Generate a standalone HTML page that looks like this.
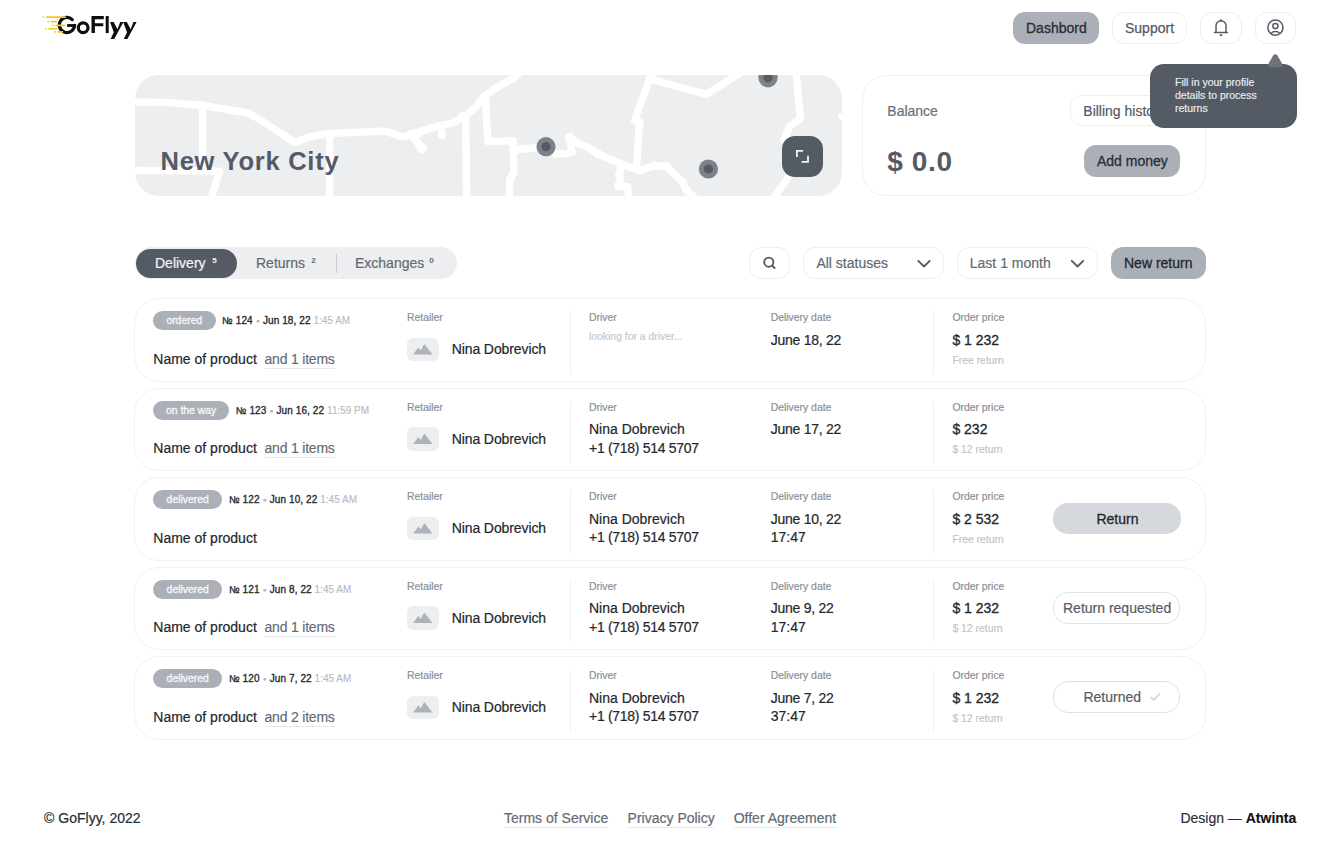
<!DOCTYPE html>
<html><head><meta charset="utf-8"><title>GoFlyy</title>
<style>
*{margin:0;padding:0;box-sizing:border-box}
html,body{width:1340px;height:846px;overflow:hidden;background:#fff}
body{position:relative;font-family:"Liberation Sans",sans-serif;color:#24272c}
.a{position:absolute}
.t{position:absolute;white-space:nowrap;line-height:1}
.box{position:absolute;border-radius:12px}
.ol{border:1.5px solid #eceef0;background:#fff}
.gr{background:#abb0b8}
.md{-webkit-text-stroke:0.25px currentColor}
.sb{-webkit-text-stroke:0.3px currentColor}
svg{position:absolute;overflow:visible}
</style></head><body>
<svg style="left:0;top:0" width="150" height="50" viewBox="0 0 150 50">
<g fill="#0d0d0d">
<path d="M72.3 19.6A7.6 7.6 0 1 0 74.5 25.4" fill="none" stroke="#0d0d0d" stroke-width="3.2" stroke-linecap="round"/>
<path d="M76.1 24.1H67.1V26.9H76.1Z"/>
<circle cx="83.15" cy="27.75" r="4.85" fill="none" stroke="#0d0d0d" stroke-width="3.2"/>
<path d="M91.5 16.05H103.8V19.3H94.9V23.2H103.3V26.3H94.9V33.1H91.5Z"/>
<path d="M105.7 16.05H108.7V33.1H105.7Z"/>
<path d="M110 22.1H113.6L117.5 29.2L120.2 22.1H123.4L114.2 38.9H110.6L113.8 32.2Z"/>
<path d="M123.2 22.1H126.8L130.7 29.2L133.4 22.1H136.6L127.4 38.9H123.8L127 32.2Z"/>
</g></svg>
<svg style="left:0;top:0" width="150" height="50" viewBox="0 0 150 50">
<g stroke="#f6c928" stroke-width="1.6" stroke-linecap="round" fill="none">
<path d="M43.3 17.1h0.3M46.3 17.1h19"/>
<path d="M48 21.6h0.3M51.2 21.6h5.6"/>
<path d="M52.8 25.4h0.3M56 25.4h8.8"/>
<path d="M45.7 28.7h0.3M48.6 28.7h8.2"/>
<path d="M55 31.9h0.3M58 31.9h4.5"/>
</g></svg>
<div class="box gr" style="left:1013px;top:12px;width:86px;height:32px"></div>
<div class="t" style="left:1026px;top:21.15px;font-size:14px;color:#2a2d33;font-weight:normal;-webkit-text-stroke:0.3px #2a2d33;">Dashbord</div>
<div class="box ol" style="left:1112px;top:12px;width:75px;height:32px"></div>
<div class="t" style="left:1125px;top:21.15px;font-size:14px;color:#555b64;font-weight:normal;-webkit-text-stroke:0.25px #555b64;">Support</div>
<div class="box ol" style="left:1200px;top:12px;width:42px;height:32px"></div>
<div class="box ol" style="left:1255px;top:12px;width:41px;height:32px"></div>
<svg style="left:0;top:0" width="1340" height="60" viewBox="0 0 1340 60">
<g stroke="#555b64" stroke-width="1.5" fill="none" stroke-linecap="round" stroke-linejoin="round">
<path d="M1216 32.3V25.8a5 5 0 0 1 10 0V32.3"/>
<path d="M1214.5 32.5H1227.5"/>
<path d="M1221 20.3v0.5" stroke-width="2"/>
<path d="M1220.5 35.2h1" stroke-width="1.7"/>
<circle cx="1275.4" cy="27.6" r="7.6"/>
<circle cx="1275.4" cy="26" r="2.6"/>
<path d="M1271.4 33.2c0.8-1.3 2.3-1.8 4-1.8s3.2 0.5 4 1.8"/>
</g></svg>
<div class="a" style="left:134.5px;top:75px;width:707.8px;height:121px;border-radius:24px;background:#edeef0;overflow:hidden">
<svg style="left:-0.5px;top:0" width="708" height="121" viewBox="134 75 708 121">
<g stroke="#fff" stroke-width="7.4" fill="none" stroke-linecap="round" stroke-linejoin="round">
<path d="M130 101.8 L171 102.6 L205 105.8 L248 113 L259 119 L294.8 142.5 L309 137 L327 133.6 L370 131.8 L385 131 L403 137 L413.7 133.6 L428 129 L440.6 125.5 L453 122.8 L465.7 115.7 L474.6 108.5 L483.6 96.9 L496 88 L514 78 L522 70"/>
<path d="M410 134 L418 143 L421.8 149.7"/>
<path d="M419 145 L421 149"/>
<path d="M441 126 L442 135"/>
<path d="M202.5 105 L202.5 170"/>
<path d="M130 170.3 L219.6 171.2 L210.6 200"/>
<path d="M329.7 133 L329.7 200"/>
<path d="M465.7 116 L466.6 200"/>
<path d="M485.4 98.7 L488 141.6 L513 140.7 L514 172 L509.6 180 L509.6 200"/>
<path d="M514 149.7 L546 147"/>
<path d="M546 146.7 L556.1 153.6 L566.9 153.6 L571.6 151.6 L569.6 137.5 L577.6 142.8 L587 146.9 L597.8 153.6 L612.5 160.3 L626 165.7 L639.4 170.4 L654.2 165.7 L666.3 166.3 L674.3 173.7 L682.4 181.8 L686.4 189.9 L697 200"/>
<path d="M620.6 166 L619.3 175.1 L620.6 179.1 L617.9 185.8 L627.3 187.2 L629.3 200"/>
<path d="M636.6 167 L639.4 122.7 L634.6 120.4 L650 77.8 L654 70"/>
<path d="M652 79.7 L706.4 94.3 L745 70"/>
<path d="M795.7 70 L800.5 118.5 L789.8 126.3 L784 140"/>
<path d="M789.8 174.8 L772.4 200"/>
<path d="M842 116.6 L846 116.6"/>
</g>
<g>
<circle cx="422" cy="148" r="4.8" fill="#fff"/><circle cx="442" cy="134.5" r="4.3" fill="#fff"/><circle cx="463.5" cy="116.5" r="5" fill="#fff"/><circle cx="417.6" cy="133.7" r="4.2" fill="#fff"/><circle cx="569.6" cy="137.5" r="4.5" fill="#fff"/><circle cx="571.6" cy="151.6" r="4.3" fill="#fff"/><circle cx="556" cy="154" r="4" fill="#fff"/><circle cx="597.8" cy="153.6" r="4.3" fill="#fff"/><circle cx="612.5" cy="160.3" r="4.2" fill="#fff"/><circle cx="654.2" cy="165.7" r="4.5" fill="#fff"/><circle cx="666.3" cy="166.3" r="4.3" fill="#fff"/><circle cx="682.4" cy="181.8" r="4.3" fill="#fff"/><circle cx="686.4" cy="189.9" r="4.2" fill="#fff"/><circle cx="639.4" cy="170.4" r="4.5" fill="#fff"/><circle cx="619.3" cy="175.1" r="4.3" fill="#fff"/><circle cx="617.9" cy="185.8" r="4.2" fill="#fff"/><circle cx="627.3" cy="187.2" r="4.2" fill="#fff"/><circle cx="639.4" cy="122.7" r="4.5" fill="#fff"/>
<circle cx="546" cy="146.7" r="9.6" fill="#7b8289"/><circle cx="546" cy="146.7" r="4.6" fill="#555b64"/>
<circle cx="708.4" cy="169" r="9.6" fill="#7b8289"/><circle cx="708.4" cy="169" r="4.6" fill="#555b64"/>
<circle cx="768" cy="77.8" r="9.6" fill="#7b8289"/><circle cx="768" cy="77.8" r="4.6" fill="#555b64"/>
</g>
</svg>
<div class="a" style="left:647.5px;top:60.5px;width:41px;height:41px;border-radius:13px;background:#555b64"></div>
</div>
<svg style="left:0;top:0" width="1340" height="200" viewBox="0 0 1340 200">
<g stroke="#f2f3f4" stroke-width="1.8" fill="none">
<path d="M796.9 157V150.8H803.1"/>
<path d="M808 155.7V161.8H801.6"/>
</g></svg>
<div class="t" style="left:160.5px;top:149.41px;font-size:25.5px;color:#545b66;font-weight:bold;letter-spacing:0.75px;">New York City</div>
<div class="a" style="left:861.8px;top:75px;width:344px;height:121px;border-radius:24px;border:1.5px solid #eff0f2"></div>
<div class="t" style="left:887.3px;top:103.85px;font-size:14px;color:#6b7079;font-weight:normal;-webkit-text-stroke:0.2px #6b7079;">Balance</div>
<div class="t" style="left:887.3px;top:147.60px;font-size:28px;color:#545b66;font-weight:bold;letter-spacing:0.6px;">$ 0.0</div>
<div class="box ol" style="left:1070px;top:94.5px;width:130px;height:31px"></div>
<div class="t" style="left:1083.3px;top:103.85px;font-size:14px;color:#555b64;font-weight:normal;-webkit-text-stroke:0.2px #555b64;">Billing history</div>
<div class="box gr" style="left:1084px;top:145px;width:96px;height:32px"></div>
<div class="t" style="left:1097px;top:153.65px;font-size:14px;color:#2a2d33;font-weight:normal;-webkit-text-stroke:0.3px #2a2d33;">Add money</div>
<div class="a" style="left:1150px;top:64px;width:147px;height:64px;border-radius:14px;background:#555b64"></div>
<svg style="left:0;top:0" width="1340" height="140" viewBox="0 0 1340 140">
<path d="M1275.3 54.2 Q1274 54.2 1273.2 55.4 L1268.6 63.6 Q1267.6 67.2 1270.2 67.2 L1280.4 67.2 Q1283 67.2 1282 63.6 L1277.4 55.4 Q1276.6 54.2 1275.3 54.2Z" fill="#6c737a"/>
</svg>
<div class="t" style="left:1175px;top:77.41px;font-size:10.5px;color:#eceef0;font-weight:normal;-webkit-text-stroke:0.15px #eceef0;">Fill in your profile</div>
<div class="t" style="left:1175px;top:90.11px;font-size:10.5px;color:#eceef0;font-weight:normal;-webkit-text-stroke:0.15px #eceef0;">details to process</div>
<div class="t" style="left:1175px;top:102.81px;font-size:10.5px;color:#eceef0;font-weight:normal;-webkit-text-stroke:0.15px #eceef0;">returns</div>
<div class="a" style="left:134.5px;top:247px;width:322px;height:32px;border-radius:16px;background:#edeef0"></div>
<div class="a" style="left:135.5px;top:248.5px;width:101.5px;height:29px;border-radius:14.5px;background:#555b64"></div>
<div class="t" style="left:155px;top:256.15px;font-size:14px;color:#f3f4f5;font-weight:normal;-webkit-text-stroke:0.2px #f3f4f5;">Delivery</div>
<div class="t" style="left:212.3px;top:256.53px;font-size:8px;color:#f3f4f5;font-weight:bold;">5</div>
<div class="t" style="left:256px;top:256.15px;font-size:14px;color:#636a74;font-weight:normal;-webkit-text-stroke:0.2px #636a74;">Returns</div>
<div class="t" style="left:311.3px;top:256.53px;font-size:8px;color:#636a74;font-weight:bold;">2</div>
<div class="a" style="left:335.5px;top:254px;width:1.2px;height:19px;background:#c9cdd2"></div>
<div class="t" style="left:355px;top:256.15px;font-size:14px;color:#636a74;font-weight:normal;-webkit-text-stroke:0.2px #636a74;">Exchanges</div>
<div class="t" style="left:429.3px;top:256.53px;font-size:8px;color:#636a74;font-weight:bold;">0</div>
<div class="box ol" style="left:749px;top:247px;width:41px;height:32px"></div>
<div class="box ol" style="left:803px;top:247px;width:141px;height:32px"></div>
<div class="t" style="left:816.4px;top:256.15px;font-size:14px;color:#636a74;font-weight:normal;-webkit-text-stroke:0.2px #636a74;">All statuses</div>
<div class="box ol" style="left:957px;top:247px;width:141px;height:32px"></div>
<div class="t" style="left:969.8px;top:256.15px;font-size:14px;color:#636a74;font-weight:normal;-webkit-text-stroke:0.2px #636a74;">Last 1 month</div>
<div class="box gr" style="left:1111px;top:247px;width:95px;height:32px"></div>
<div class="t" style="left:1124px;top:256.15px;font-size:14px;color:#24272c;font-weight:normal;-webkit-text-stroke:0.3px #24272c;">New return</div>
<svg style="left:0;top:0" width="1340" height="300" viewBox="0 0 1340 300">
<g stroke="#555b64" stroke-width="1.9" fill="none" stroke-linecap="round" stroke-linejoin="round">
<circle cx="768.8" cy="262.2" r="4.6"/>
<path d="M772.2 265.6L774.6 268"/>
<path d="M918.3 260.8L924 266.5L929.7 260.8"/>
<path d="M1071.8 260.8L1077.5 266.5L1083.2 260.8"/>
</g></svg>
<div class="a" style="left:133.8px;top:298.4px;width:1072.2px;height:83.3px;border-radius:25px;border:1.6px solid #f0f1f3"></div>
<div class="a" style="left:153px;top:311px;width:62.6px;height:19px;border-radius:9.5px;background:#abb0b8;color:#f7f8f9;font-size:10.4px;line-height:19.6px;text-align:center;white-space:nowrap;-webkit-text-stroke:0.3px #f7f8f9">ordered</div>
<div class="t" style="left:222.1px;top:316.14px;font-size:10px;color:#24272c;font-weight:normal;letter-spacing:0.1px;-webkit-text-stroke:0.32px #24272c;">№ 124 <span style="color:#b5b9bf;font-size:7px;vertical-align:1px;-webkit-text-stroke:0">●</span> Jun 18, 22 <span style="color:#b5b9bf;font-weight:normal;-webkit-text-stroke:0.1px #b5b9bf;letter-spacing:0">1:45 AM</span></div>
<div class="t" style="left:153.3px;top:351.65px;font-size:14px;color:#24272c;font-weight:normal;-webkit-text-stroke:0.2px #24272c;">Name of product</div>
<div class="a" style="left:264.5px;top:367.5px;width:70px;height:1px;background:#e6e8eb"></div>
<div class="t" style="left:264.5px;top:351.65px;font-size:14px;color:#636a74;font-weight:normal;letter-spacing:-0.2px;-webkit-text-stroke:0.15px #636a74;">and 1 items</div>
<div class="t" style="left:407px;top:313.20px;font-size:10.4px;color:#8a9099;font-weight:normal;-webkit-text-stroke:0.2px #8a9099;">Retailer</div>
<div class="a" style="left:407px;top:337.5px;width:31.5px;height:23.5px;border-radius:6px;background:#edeef0"></div>
<svg style="left:0;top:0" width="1340" height="846" viewBox="0 0 1340 846"><path d="M413.1 354.6 L418.3 347.6 L420.6 350.2 L424.3 343.9 L432.5 354.6Z" fill="#aeb3ba"/><path d="M420.3 347.9 L421.6 349.3" stroke="#edeef0" stroke-width="0.8"/></svg>
<div class="t" style="left:451.7px;top:342.15px;font-size:14px;color:#24272c;font-weight:normal;letter-spacing:-0.1px;-webkit-text-stroke:0.2px #24272c;">Nina Dobrevich</div>
<div class="a" style="left:569.5px;top:311px;width:1px;height:63px;background:#eef0f2"></div>
<div class="t" style="left:589px;top:313.20px;font-size:10.4px;color:#8a9099;font-weight:normal;-webkit-text-stroke:0.2px #8a9099;">Driver</div>
<div class="t" style="left:589px;top:332.00px;font-size:10.4px;color:#c3c7cc;font-weight:normal;-webkit-text-stroke:0.15px #c3c7cc;">looking for a driver...</div>
<div class="t" style="left:770.7px;top:313.20px;font-size:10.4px;color:#8a9099;font-weight:normal;-webkit-text-stroke:0.2px #8a9099;">Delivery date</div>
<div class="t" style="left:770.7px;top:332.75px;font-size:14px;color:#24272c;font-weight:normal;letter-spacing:-0.25px;-webkit-text-stroke:0.2px #24272c;">June 18, 22</div>
<div class="a" style="left:933px;top:311px;width:1px;height:63px;background:#eef0f2"></div>
<div class="t" style="left:952.4px;top:313.20px;font-size:10.4px;color:#8a9099;font-weight:normal;-webkit-text-stroke:0.2px #8a9099;">Order price</div>
<div class="t" style="left:952.4px;top:332.65px;font-size:14px;color:#24272c;font-weight:normal;letter-spacing:0px;-webkit-text-stroke:0.3px #24272c;">$ 1 232</div>
<div class="t" style="left:952.4px;top:355.80px;font-size:10.4px;color:#c0c4c9;font-weight:normal;-webkit-text-stroke:0.15px #c0c4c9;">Free return</div>
<div class="a" style="left:133.8px;top:387.9px;width:1072.2px;height:83.3px;border-radius:25px;border:1.6px solid #f0f1f3"></div>
<div class="a" style="left:153px;top:400.5px;width:76.2px;height:19px;border-radius:9.5px;background:#abb0b8;color:#f7f8f9;font-size:10.4px;line-height:19.6px;text-align:center;white-space:nowrap;-webkit-text-stroke:0.3px #f7f8f9">on the way</div>
<div class="t" style="left:235.7px;top:405.64px;font-size:10px;color:#24272c;font-weight:normal;letter-spacing:0.1px;-webkit-text-stroke:0.32px #24272c;">№ 123 <span style="color:#b5b9bf;font-size:7px;vertical-align:1px;-webkit-text-stroke:0">●</span> Jun 16, 22 <span style="color:#b5b9bf;font-weight:normal;-webkit-text-stroke:0.1px #b5b9bf;letter-spacing:0">11:59 PM</span></div>
<div class="t" style="left:153.3px;top:441.15px;font-size:14px;color:#24272c;font-weight:normal;-webkit-text-stroke:0.2px #24272c;">Name of product</div>
<div class="a" style="left:264.5px;top:457.0px;width:70px;height:1px;background:#e6e8eb"></div>
<div class="t" style="left:264.5px;top:441.15px;font-size:14px;color:#636a74;font-weight:normal;letter-spacing:-0.2px;-webkit-text-stroke:0.15px #636a74;">and 1 items</div>
<div class="t" style="left:407px;top:402.70px;font-size:10.4px;color:#8a9099;font-weight:normal;-webkit-text-stroke:0.2px #8a9099;">Retailer</div>
<div class="a" style="left:407px;top:427.0px;width:31.5px;height:23.5px;border-radius:6px;background:#edeef0"></div>
<svg style="left:0;top:0" width="1340" height="846" viewBox="0 0 1340 846"><path d="M413.1 444.1 L418.3 437.1 L420.6 439.7 L424.3 433.4 L432.5 444.1Z" fill="#aeb3ba"/><path d="M420.3 437.4 L421.6 438.8" stroke="#edeef0" stroke-width="0.8"/></svg>
<div class="t" style="left:451.7px;top:431.65px;font-size:14px;color:#24272c;font-weight:normal;letter-spacing:-0.1px;-webkit-text-stroke:0.2px #24272c;">Nina Dobrevich</div>
<div class="a" style="left:569.5px;top:400.5px;width:1px;height:63px;background:#eef0f2"></div>
<div class="t" style="left:589px;top:402.70px;font-size:10.4px;color:#8a9099;font-weight:normal;-webkit-text-stroke:0.2px #8a9099;">Driver</div>
<div class="t" style="left:589px;top:422.05px;font-size:14px;color:#24272c;font-weight:normal;-webkit-text-stroke:0.2px #24272c;">Nina Dobrevich</div>
<div class="t" style="left:589px;top:440.65px;font-size:14px;color:#24272c;font-weight:normal;letter-spacing:-0.3px;-webkit-text-stroke:0.2px #24272c;">+1 (718) 514 5707</div>
<div class="t" style="left:770.7px;top:402.70px;font-size:10.4px;color:#8a9099;font-weight:normal;-webkit-text-stroke:0.2px #8a9099;">Delivery date</div>
<div class="t" style="left:770.7px;top:422.25px;font-size:14px;color:#24272c;font-weight:normal;letter-spacing:-0.25px;-webkit-text-stroke:0.2px #24272c;">June 17, 22</div>
<div class="a" style="left:933px;top:400.5px;width:1px;height:63px;background:#eef0f2"></div>
<div class="t" style="left:952.4px;top:402.70px;font-size:10.4px;color:#8a9099;font-weight:normal;-webkit-text-stroke:0.2px #8a9099;">Order price</div>
<div class="t" style="left:952.4px;top:422.15px;font-size:14px;color:#24272c;font-weight:normal;letter-spacing:0px;-webkit-text-stroke:0.3px #24272c;">$ 232</div>
<div class="t" style="left:952.4px;top:445.30px;font-size:10.4px;color:#c0c4c9;font-weight:normal;-webkit-text-stroke:0.15px #c0c4c9;">$ 12 return</div>
<div class="a" style="left:133.8px;top:477.4px;width:1072.2px;height:83.3px;border-radius:25px;border:1.6px solid #f0f1f3"></div>
<div class="a" style="left:153px;top:490px;width:69.4px;height:19px;border-radius:9.5px;background:#abb0b8;color:#f7f8f9;font-size:10.4px;line-height:19.6px;text-align:center;white-space:nowrap;-webkit-text-stroke:0.3px #f7f8f9">delivered</div>
<div class="t" style="left:228.9px;top:495.14px;font-size:10px;color:#24272c;font-weight:normal;letter-spacing:0.1px;-webkit-text-stroke:0.32px #24272c;">№ 122 <span style="color:#b5b9bf;font-size:7px;vertical-align:1px;-webkit-text-stroke:0">●</span> Jun 10, 22 <span style="color:#b5b9bf;font-weight:normal;-webkit-text-stroke:0.1px #b5b9bf;letter-spacing:0">1:45 AM</span></div>
<div class="t" style="left:153.3px;top:530.65px;font-size:14px;color:#24272c;font-weight:normal;-webkit-text-stroke:0.2px #24272c;">Name of product</div>
<div class="t" style="left:407px;top:492.20px;font-size:10.4px;color:#8a9099;font-weight:normal;-webkit-text-stroke:0.2px #8a9099;">Retailer</div>
<div class="a" style="left:407px;top:516.5px;width:31.5px;height:23.5px;border-radius:6px;background:#edeef0"></div>
<svg style="left:0;top:0" width="1340" height="846" viewBox="0 0 1340 846"><path d="M413.1 533.6 L418.3 526.6 L420.6 529.2 L424.3 522.9 L432.5 533.6Z" fill="#aeb3ba"/><path d="M420.3 526.9 L421.6 528.3" stroke="#edeef0" stroke-width="0.8"/></svg>
<div class="t" style="left:451.7px;top:521.15px;font-size:14px;color:#24272c;font-weight:normal;letter-spacing:-0.1px;-webkit-text-stroke:0.2px #24272c;">Nina Dobrevich</div>
<div class="a" style="left:569.5px;top:490px;width:1px;height:63px;background:#eef0f2"></div>
<div class="t" style="left:589px;top:492.20px;font-size:10.4px;color:#8a9099;font-weight:normal;-webkit-text-stroke:0.2px #8a9099;">Driver</div>
<div class="t" style="left:589px;top:511.55px;font-size:14px;color:#24272c;font-weight:normal;-webkit-text-stroke:0.2px #24272c;">Nina Dobrevich</div>
<div class="t" style="left:589px;top:530.15px;font-size:14px;color:#24272c;font-weight:normal;letter-spacing:-0.3px;-webkit-text-stroke:0.2px #24272c;">+1 (718) 514 5707</div>
<div class="t" style="left:770.7px;top:492.20px;font-size:10.4px;color:#8a9099;font-weight:normal;-webkit-text-stroke:0.2px #8a9099;">Delivery date</div>
<div class="t" style="left:770.7px;top:511.75px;font-size:14px;color:#24272c;font-weight:normal;letter-spacing:-0.25px;-webkit-text-stroke:0.2px #24272c;">June 10, 22</div>
<div class="t" style="left:770.7px;top:530.15px;font-size:14px;color:#24272c;font-weight:normal;-webkit-text-stroke:0.2px #24272c;">17:47</div>
<div class="a" style="left:933px;top:490px;width:1px;height:63px;background:#eef0f2"></div>
<div class="t" style="left:952.4px;top:492.20px;font-size:10.4px;color:#8a9099;font-weight:normal;-webkit-text-stroke:0.2px #8a9099;">Order price</div>
<div class="t" style="left:952.4px;top:511.65px;font-size:14px;color:#24272c;font-weight:normal;letter-spacing:0px;-webkit-text-stroke:0.3px #24272c;">$ 2 532</div>
<div class="t" style="left:952.4px;top:534.80px;font-size:10.4px;color:#c0c4c9;font-weight:normal;-webkit-text-stroke:0.15px #c0c4c9;">Free return</div>
<div class="a" style="left:1053px;top:502.7px;width:127.5px;height:31.5px;border-radius:15px;background:#d5d8dc"></div>
<div class="t" style="left:1096.4px;top:511.65px;font-size:14px;color:#24272c;font-weight:normal;-webkit-text-stroke:0.3px #24272c;">Return</div>
<div class="a" style="left:133.8px;top:566.9px;width:1072.2px;height:83.3px;border-radius:25px;border:1.6px solid #f0f1f3"></div>
<div class="a" style="left:153px;top:579.5px;width:69.4px;height:19px;border-radius:9.5px;background:#abb0b8;color:#f7f8f9;font-size:10.4px;line-height:19.6px;text-align:center;white-space:nowrap;-webkit-text-stroke:0.3px #f7f8f9">delivered</div>
<div class="t" style="left:228.9px;top:584.63px;font-size:10px;color:#24272c;font-weight:normal;letter-spacing:0.1px;-webkit-text-stroke:0.32px #24272c;">№ 121 <span style="color:#b5b9bf;font-size:7px;vertical-align:1px;-webkit-text-stroke:0">●</span> Jun 8, 22 <span style="color:#b5b9bf;font-weight:normal;-webkit-text-stroke:0.1px #b5b9bf;letter-spacing:0">1:45 AM</span></div>
<div class="t" style="left:153.3px;top:620.15px;font-size:14px;color:#24272c;font-weight:normal;-webkit-text-stroke:0.2px #24272c;">Name of product</div>
<div class="a" style="left:264.5px;top:636.0px;width:70px;height:1px;background:#e6e8eb"></div>
<div class="t" style="left:264.5px;top:620.15px;font-size:14px;color:#636a74;font-weight:normal;letter-spacing:-0.2px;-webkit-text-stroke:0.15px #636a74;">and 1 items</div>
<div class="t" style="left:407px;top:581.70px;font-size:10.4px;color:#8a9099;font-weight:normal;-webkit-text-stroke:0.2px #8a9099;">Retailer</div>
<div class="a" style="left:407px;top:606.0px;width:31.5px;height:23.5px;border-radius:6px;background:#edeef0"></div>
<svg style="left:0;top:0" width="1340" height="846" viewBox="0 0 1340 846"><path d="M413.1 623.1 L418.3 616.1 L420.6 618.7 L424.3 612.4 L432.5 623.1Z" fill="#aeb3ba"/><path d="M420.3 616.4 L421.6 617.8" stroke="#edeef0" stroke-width="0.8"/></svg>
<div class="t" style="left:451.7px;top:610.65px;font-size:14px;color:#24272c;font-weight:normal;letter-spacing:-0.1px;-webkit-text-stroke:0.2px #24272c;">Nina Dobrevich</div>
<div class="a" style="left:569.5px;top:579.5px;width:1px;height:63px;background:#eef0f2"></div>
<div class="t" style="left:589px;top:581.70px;font-size:10.4px;color:#8a9099;font-weight:normal;-webkit-text-stroke:0.2px #8a9099;">Driver</div>
<div class="t" style="left:589px;top:601.05px;font-size:14px;color:#24272c;font-weight:normal;-webkit-text-stroke:0.2px #24272c;">Nina Dobrevich</div>
<div class="t" style="left:589px;top:619.65px;font-size:14px;color:#24272c;font-weight:normal;letter-spacing:-0.3px;-webkit-text-stroke:0.2px #24272c;">+1 (718) 514 5707</div>
<div class="t" style="left:770.7px;top:581.70px;font-size:10.4px;color:#8a9099;font-weight:normal;-webkit-text-stroke:0.2px #8a9099;">Delivery date</div>
<div class="t" style="left:770.7px;top:601.25px;font-size:14px;color:#24272c;font-weight:normal;letter-spacing:-0.25px;-webkit-text-stroke:0.2px #24272c;">June 9, 22</div>
<div class="t" style="left:770.7px;top:619.65px;font-size:14px;color:#24272c;font-weight:normal;-webkit-text-stroke:0.2px #24272c;">17:47</div>
<div class="a" style="left:933px;top:579.5px;width:1px;height:63px;background:#eef0f2"></div>
<div class="t" style="left:952.4px;top:581.70px;font-size:10.4px;color:#8a9099;font-weight:normal;-webkit-text-stroke:0.2px #8a9099;">Order price</div>
<div class="t" style="left:952.4px;top:601.15px;font-size:14px;color:#24272c;font-weight:normal;letter-spacing:0px;-webkit-text-stroke:0.3px #24272c;">$ 1 232</div>
<div class="t" style="left:952.4px;top:624.30px;font-size:10.4px;color:#c0c4c9;font-weight:normal;-webkit-text-stroke:0.15px #c0c4c9;">$ 12 return</div>
<div class="a" style="left:1052.8px;top:592.0px;width:127.7px;height:31.5px;border-radius:15px;border:1.3px solid #dfe2e5"></div>
<div class="t" style="left:1063px;top:600.95px;font-size:14px;color:#555b64;font-weight:normal;-webkit-text-stroke:0.2px #555b64;">Return requested</div>
<div class="a" style="left:133.8px;top:656.4px;width:1072.2px;height:83.3px;border-radius:25px;border:1.6px solid #f0f1f3"></div>
<div class="a" style="left:153px;top:669px;width:69.4px;height:19px;border-radius:9.5px;background:#abb0b8;color:#f7f8f9;font-size:10.4px;line-height:19.6px;text-align:center;white-space:nowrap;-webkit-text-stroke:0.3px #f7f8f9">delivered</div>
<div class="t" style="left:228.9px;top:674.13px;font-size:10px;color:#24272c;font-weight:normal;letter-spacing:0.1px;-webkit-text-stroke:0.32px #24272c;">№ 120 <span style="color:#b5b9bf;font-size:7px;vertical-align:1px;-webkit-text-stroke:0">●</span> Jun 7, 22 <span style="color:#b5b9bf;font-weight:normal;-webkit-text-stroke:0.1px #b5b9bf;letter-spacing:0">1:45 AM</span></div>
<div class="t" style="left:153.3px;top:709.65px;font-size:14px;color:#24272c;font-weight:normal;-webkit-text-stroke:0.2px #24272c;">Name of product</div>
<div class="a" style="left:264.5px;top:725.5px;width:70px;height:1px;background:#e6e8eb"></div>
<div class="t" style="left:264.5px;top:709.65px;font-size:14px;color:#636a74;font-weight:normal;letter-spacing:-0.2px;-webkit-text-stroke:0.15px #636a74;">and 2 items</div>
<div class="t" style="left:407px;top:671.20px;font-size:10.4px;color:#8a9099;font-weight:normal;-webkit-text-stroke:0.2px #8a9099;">Retailer</div>
<div class="a" style="left:407px;top:695.5px;width:31.5px;height:23.5px;border-radius:6px;background:#edeef0"></div>
<svg style="left:0;top:0" width="1340" height="846" viewBox="0 0 1340 846"><path d="M413.1 712.6 L418.3 705.6 L420.6 708.2 L424.3 701.9 L432.5 712.6Z" fill="#aeb3ba"/><path d="M420.3 705.9 L421.6 707.3" stroke="#edeef0" stroke-width="0.8"/></svg>
<div class="t" style="left:451.7px;top:700.15px;font-size:14px;color:#24272c;font-weight:normal;letter-spacing:-0.1px;-webkit-text-stroke:0.2px #24272c;">Nina Dobrevich</div>
<div class="a" style="left:569.5px;top:669px;width:1px;height:63px;background:#eef0f2"></div>
<div class="t" style="left:589px;top:671.20px;font-size:10.4px;color:#8a9099;font-weight:normal;-webkit-text-stroke:0.2px #8a9099;">Driver</div>
<div class="t" style="left:589px;top:690.55px;font-size:14px;color:#24272c;font-weight:normal;-webkit-text-stroke:0.2px #24272c;">Nina Dobrevich</div>
<div class="t" style="left:589px;top:709.15px;font-size:14px;color:#24272c;font-weight:normal;letter-spacing:-0.3px;-webkit-text-stroke:0.2px #24272c;">+1 (718) 514 5707</div>
<div class="t" style="left:770.7px;top:671.20px;font-size:10.4px;color:#8a9099;font-weight:normal;-webkit-text-stroke:0.2px #8a9099;">Delivery date</div>
<div class="t" style="left:770.7px;top:690.75px;font-size:14px;color:#24272c;font-weight:normal;letter-spacing:-0.25px;-webkit-text-stroke:0.2px #24272c;">June 7, 22</div>
<div class="t" style="left:770.7px;top:709.15px;font-size:14px;color:#24272c;font-weight:normal;-webkit-text-stroke:0.2px #24272c;">37:47</div>
<div class="a" style="left:933px;top:669px;width:1px;height:63px;background:#eef0f2"></div>
<div class="t" style="left:952.4px;top:671.20px;font-size:10.4px;color:#8a9099;font-weight:normal;-webkit-text-stroke:0.2px #8a9099;">Order price</div>
<div class="t" style="left:952.4px;top:690.65px;font-size:14px;color:#24272c;font-weight:normal;letter-spacing:0px;-webkit-text-stroke:0.3px #24272c;">$ 1 232</div>
<div class="t" style="left:952.4px;top:713.80px;font-size:10.4px;color:#c0c4c9;font-weight:normal;-webkit-text-stroke:0.15px #c0c4c9;">$ 12 return</div>
<div class="a" style="left:1052.8px;top:681.4px;width:127.7px;height:31.5px;border-radius:15px;border:1.3px solid #dfe2e5"></div>
<div class="t" style="left:1083.4px;top:690.35px;font-size:14px;color:#555b64;font-weight:normal;-webkit-text-stroke:0.2px #555b64;">Returned</div>
<svg style="left:0;top:0" width="1340" height="846" viewBox="0 0 1340 846"><path d="M1151 697.3 L1153.8 700 L1159.5 693.8" stroke="#c5c9cd" stroke-width="1.2" fill="none" stroke-linecap="round" stroke-linejoin="round"/></svg>
<div class="t" style="left:44.1px;top:810.75px;font-size:14px;color:#2a2d33;font-weight:normal;-webkit-text-stroke:0.2px #2a2d33;">© GoFlyy, 2022</div>
<div class="t" style="left:504px;top:810.95px;font-size:14px;color:#636a74;font-weight:normal;-webkit-text-stroke:0.2px #636a74;">Terms of Service</div>
<div class="a" style="left:504px;top:826.8px;width:104px;height:1px;background:#e8eaed"></div>
<div class="t" style="left:627.6px;top:810.95px;font-size:14px;color:#636a74;font-weight:normal;-webkit-text-stroke:0.2px #636a74;">Privacy Policy</div>
<div class="a" style="left:627.6px;top:826.8px;width:86.5px;height:1px;background:#e8eaed"></div>
<div class="t" style="left:733.7px;top:810.95px;font-size:14px;color:#636a74;font-weight:normal;-webkit-text-stroke:0.2px #636a74;">Offer Agreement</div>
<div class="a" style="left:733.7px;top:826.8px;width:104px;height:1px;background:#e8eaed"></div>
<div class="t" style="left:1180.4px;top:810.75px;font-size:14px;color:#2a2d33;font-weight:normal;-webkit-text-stroke:0.15px #2a2d33;">Design — <b style="color:#111">Atwinta</b></div>

</body></html>
